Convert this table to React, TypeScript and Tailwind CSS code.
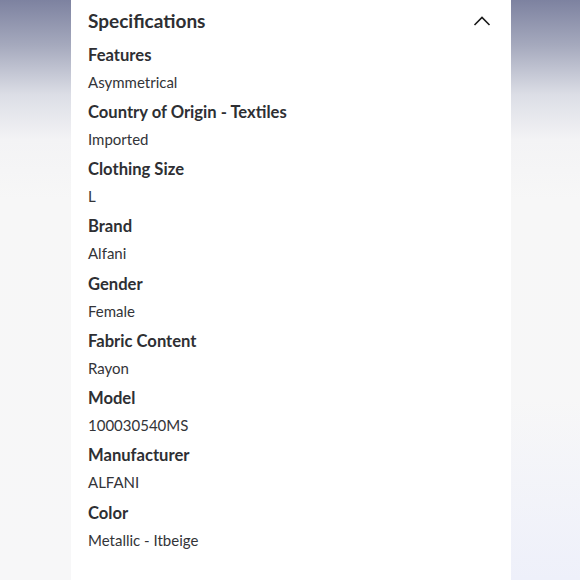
const specs = [
  { label: "Features", value: "Asymmetrical" },
  { label: "Country of Origin - Textiles", value: "Imported" },
  { label: "Clothing Size", value: "L" },
  { label: "Brand", value: "Alfani" },
  { label: "Gender", value: "Female" },
  { label: "Fabric Content", value: "Rayon" },
  { label: "Model", value: "100030540MS" },
  { label: "Manufacturer", value: "ALFANI" },
  { label: "Color", value: "Metallic - Itbeige" },
]

export default function App() {
  return (
    <div className="relative w-[580px] h-[580px] overflow-hidden bg-[linear-gradient(180deg,#7d82a0_0px,#a5a9bd_45px,#dcdee6_95px,#f3f3f5_140px,#f7f7f7_200px,#f7f7f8_580px)] font-['Lato','Noto_Sans',sans-serif]">

      {/* faint blue glow bottom right */}
      <div className="absolute right-0 bottom-0 w-[70px] h-[180px] bg-[linear-gradient(180deg,rgba(240,242,252,0)_0%,#eef0fa_100%)]" />

      <div className="relative ml-[71px] w-[440px] h-full bg-white px-[17px] text-[#2e2f33]">

        {/* HEADER */}
        <div className="h-[41.5px] flex items-center justify-between">
          <h2 className="text-[19px] font-bold">
            Specifications
          </h2>
          <svg
            width="18"
            height="12"
            viewBox="0 0 18 12"
            className="mr-[3px] mt-[1px]"
          >
            <path
              d="M1.5 10 L9 2.5 L16.5 10"
              fill="none"
              stroke="#1a1a1a"
              strokeWidth="1.6"
            />
          </svg>
        </div>

        {/* LIST */}
        {specs.map((item) => (
          <div key={item.label} className="pb-[4.25px]">
            <div className="text-[16.6px] font-bold leading-[27px]">
              {item.label}
            </div>
            <div className="text-[15px] leading-[26px] text-[#333438]">
              {item.value}
            </div>
          </div>
        ))}

      </div>
    </div>
  )
}
